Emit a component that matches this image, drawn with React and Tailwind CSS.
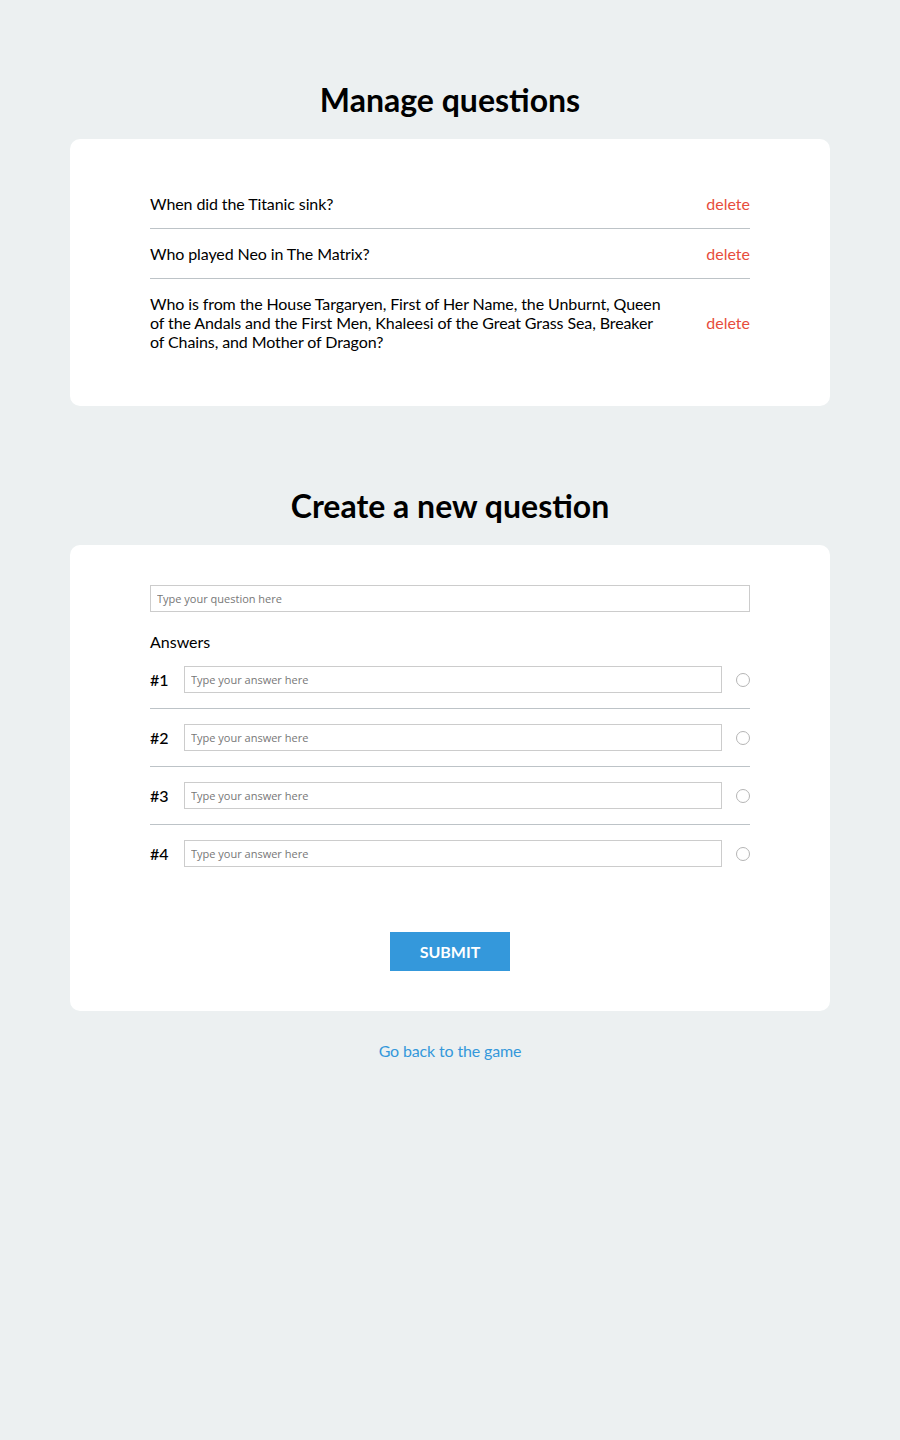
import { useState } from "react";

const questions = [
  { id: 1, text: "When did the Titanic sink?" },
  { id: 2, text: "Who played Neo in The Matrix?" },
  {
    id: 3,
    text: "Who is from the House Targaryen, First of Her Name, the Unburnt, Queen of the Andals and the First Men, Khaleesi of the Great Grass Sea, Breaker of Chains, and Mother of Dragon?",
  },
];

const App = () => {
  const [items, setItems] = useState(questions);
  const [correct, setCorrect] = useState(null);

  return (
    <div className="min-h-[1440px] bg-[#ecf0f1] font-['Lato',sans-serif] text-black">
      <div className="mx-auto w-[760px] pt-[78px] pb-10">

        {/* Manage */}
        <h1 className="text-center text-[32px] font-bold leading-[44px] mb-[17px]">Manage questions</h1>
        <div className="bg-white rounded-[10px] px-20 py-10">
          {items.map((q, i) => (
            <div
              key={q.id}
              className={`flex items-center py-[15px] ${i < items.length - 1 ? "border-b border-[#bdc3c7]" : ""}`}
            >
              <p className="flex-1 pr-10 text-[16px] leading-[19px] tracking-[-0.1px]">{q.text}</p>
              <button
                onClick={() => setItems(prev => prev.filter(x => x.id !== q.id))}
                className="text-[16px] leading-[19px] text-[#e74c3c]"
              >
                delete
              </button>
            </div>
          ))}
        </div>

        {/* Create */}
        <h1 className="text-center text-[32px] font-bold leading-[44px] mt-[78px] mb-[17px]">Create a new question</h1>
        <div className="bg-white rounded-[10px] px-20 py-10">
          <input
            type="text"
            placeholder="Type your question here"
            className="block w-full h-[27px] border border-[#ccc] px-[6px] text-[11px] font-['Open_Sans',sans-serif] placeholder:text-[#777] outline-none"
          />
          <div className="mt-[20px] text-[16px] leading-[19px]">Answers</div>
          <div className="mt-[15px]">
            {[1, 2, 3, 4].map((n, i) => (
              <div
                key={n}
                className={`flex items-center ${i < 3 ? "pb-[15px] mb-[15px] border-b border-[#bdc3c7]" : ""}`}
              >
                <span className="w-[34px] text-[16px] font-medium">#{n}</span>
                <input
                  type="text"
                  placeholder="Type your answer here"
                  className="flex-1 h-[27px] border border-[#ccc] px-[6px] text-[11px] font-['Open_Sans',sans-serif] placeholder:text-[#777] outline-none"
                />
                <button
                  onClick={() => setCorrect(n)}
                  className="ml-[14px] w-[14px] h-[14px] rounded-full border border-[#b5b5b5] flex items-center justify-center"
                >
                  {correct === n && <span className="w-[8px] h-[8px] rounded-full bg-[#3498db]" />}
                </button>
              </div>
            ))}
          </div>
          <div className="flex justify-center mt-[65px]">
            <button className="w-[120px] h-[39px] bg-[#3498db] text-white text-[16px] font-bold uppercase">
              Submit
            </button>
          </div>
        </div>

        <div className="text-center mt-[28px]">
          <a href="#" className="text-[16px] tracking-[-0.15px] text-[#3498db]">Go back to the game</a>
        </div>
      </div>
    </div>
  );
};

export default App;
